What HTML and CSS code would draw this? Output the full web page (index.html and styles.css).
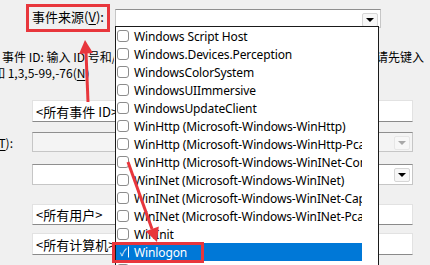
FILE: index.html
```html
<!DOCTYPE html>
<html lang="zh-CN">
<head>
    <meta charset="UTF-8">
    <title>筛选当前日志</title>
    <link rel="stylesheet" href="styles.css">
</head>
<body>
    <div class="dialog">
        <div class="source-row">
            <label class="mark-box">事件来源(<u>V</u>):</label>
            <div class="combo source-combo"><span class="combo-btn"><i class="caret"></i></span></div>
        </div>

        <div class="help">
            <div class="help-line"><span class="help-left">事件 ID: 输入 ID 号和/或 ID 范围，使用逗号分隔。若要排除条件，</span><span class="help-right">请先键入</span></div>
            <div class="help-line second">例如 1,3,5-99,-76(<u>N</u>)</div>
        </div>

        <div class="field-row r-id">
            <div class="flabel"></div>
            <div class="input">&lt;所有事件 ID&gt;</div>
        </div>
        <div class="field-row r-task">
            <div class="flabel">任务类别(<u>T</u>):</div>
            <div class="combo disabled"><span class="combo-btn"><i class="caret"></i></span></div>
        </div>
        <div class="field-row r-key">
            <div class="flabel"></div>
            <div class="combo"><span class="combo-btn"><i class="caret"></i></span></div>
        </div>
        <div class="field-row r-user">
            <div class="flabel"></div>
            <div class="input">&lt;所有用户&gt;</div>
        </div>
        <div class="field-row r-pc">
            <div class="flabel"></div>
            <div class="input">&lt;所有计算机&gt;</div>
        </div>

        <!-- 展开的下拉列表，盖在表单上面 -->
        <div class="droplist">
            <div class="item"><span class="box"></span><span class="name">Windows Script Host</span></div>
            <div class="item"><span class="box"></span><span class="name">Windows.Devices.Perception</span></div>
            <div class="item"><span class="box"></span><span class="name">WindowsColorSystem</span></div>
            <div class="item"><span class="box"></span><span class="name">WindowsUIImmersive</span></div>
            <div class="item"><span class="box"></span><span class="name">WindowsUpdateClient</span></div>
            <div class="item"><span class="box"></span><span class="name">WinHttp (Microsoft-Windows-WinHttp)</span></div>
            <div class="item"><span class="box"></span><span class="name">WinHttp (Microsoft-Windows-WinHttp-PcaSvc)</span></div>
            <div class="item"><span class="box"></span><span class="name">WinHttp (Microsoft-Windows-WinINet-Config)</span></div>
            <div class="item"><span class="box"></span><span class="name">WinINet (Microsoft-Windows-WinINet)</span></div>
            <div class="item"><span class="box"></span><span class="name">WinINet (Microsoft-Windows-WinINet-Capture)</span></div>
            <div class="item"><span class="box"></span><span class="name">WinINet (Microsoft-Windows-WinINet-PcaSvc)</span></div>
            <div class="item"><span class="box"></span><span class="name">WinInit</span></div>
            <div class="item selected"><span class="box checked">&#10003;</span><span class="name">Winlogon</span></div>
            <div class="item"><span class="box"></span><span class="name">Winsock AFD</span></div>
        </div>

        <div class="mark-item"></div>

        <svg class="arrows" width="430" height="265" viewBox="0 0 430 265">
            <line x1="88" y1="102" x2="86" y2="52" stroke="#e8363c" stroke-width="3"/>
            <polygon points="85,40 79,54 93,53" fill="#e8363c"/>
            <line x1="128" y1="162" x2="152" y2="229" stroke="#e8363c" stroke-width="3"/>
            <polygon points="157,242 145.6,231.2 158.8,226.4" fill="#e8363c"/>
        </svg>
    </div>
</body>
</html>
```

FILE: styles.css
```css
* {
    box-sizing: border-box;
}

body {
    margin: 0;
    background-color: #f0f0f0;
    font-family: "Noto Sans", "Noto Sans CJK SC", sans-serif;
    font-size: 12px;
    color: #000;
    overflow: hidden;
}

.dialog {
    position: relative;
    width: 430px;
    height: 265px;
    overflow: hidden;
}

u {
    text-decoration: underline;
    text-underline-offset: 2px;
}

.source-row {
    display: flex;
    padding-top: 4px;
}

.mark-box {
    margin-left: 26px;
    width: 84px;
    height: 28px;
    border: 3px solid #e8363c;
    display: flex;
    align-items: center;
    padding-left: 3px;
    padding-bottom: 3px;
    font-family: "Noto Sans CJK SC", sans-serif;
    font-size: 13px;
}

.combo {
    position: relative;
    height: 20px;
    background-color: #fff;
    border: 1px solid #c6c6c6;
    border-top-color: #8f8f8f;
}

.source-combo {
    margin: 5px 0 0 5px;
    width: 266px;
    height: 19px;
}

.combo-btn {
    position: absolute;
    right: 2px;
    top: 3px;
    width: 16px;
    height: 14px;
    border: 1px solid #d6d6d6;
    border-radius: 2px;
    background-color: #f7f7f7;
    display: flex;
    align-items: center;
    justify-content: center;
}

.caret {
    width: 0;
    height: 0;
    border-left: 4px solid transparent;
    border-right: 4px solid transparent;
    border-top: 4px solid #000;
}

.combo.disabled {
    background-color: #f4f4f4;
}

.combo.disabled .combo-btn {
    border-color: #e6e6e6;
}

.combo.disabled .caret {
    border-top-color: #a8a8a8;
}

.help {
    margin-top: 17px;
    padding-left: 2px;
    font-family: "Noto Sans CJK SC", sans-serif;
    line-height: 16px;
}

.help-line {
    display: flex;
    white-space: nowrap;
}

.help-left {
    width: 112px;
    overflow: hidden;
}

.help-right {
    margin-left: 262px;
}

.help-line.second {
    margin-left: -21px;
}

.field-row {
    display: grid;
    grid-template-columns: 32px 381px;
    align-items: center;
}

.flabel {
    display: flex;
    justify-content: flex-end;
    white-space: nowrap;
    padding-right: 19px;
    font-family: "Noto Sans CJK SC", sans-serif;
}

.input {
    background-color: #fff;
    border: 1px solid #e2e2e2;
    border-bottom-color: #8a8a8a;
    padding-left: 3px;
    font-family: "Noto Sans CJK SC", sans-serif;
    font-size: 13px;
    display: flex;
    align-items: center;
}

.r-id {
    margin-top: 19px;
}

.r-id .input {
    height: 22px;
}

.r-task {
    margin-top: 10px;
}

.r-task .combo {
    height: 20px;
}

.r-key {
    margin-top: 12px;
}

.r-key .combo {
    height: 21px;
}

.r-user {
    margin-top: 19px;
}

.r-user .input {
    height: 21px;
}

.r-pc {
    margin-top: 8px;
}

.r-pc .input {
    height: 22px;
}

.droplist {
    position: absolute;
    left: 115px;
    top: 26px;
    width: 264px;
    height: 260px;
    background-color: #fff;
    border: 1px solid #1a1a1a;
    padding-right: 16px;
}

.item {
    height: 18px;
    display: flex;
    align-items: center;
    white-space: nowrap;
    overflow: hidden;
    padding-left: 1px;
    letter-spacing: -0.12px;
}

.box {
    flex: none;
    width: 12px;
    height: 12px;
    border: 1px solid #8c8c8c;
    border-radius: 3px;
    background-color: #fff;
    margin-right: 5px;
    font-size: 10px;
    line-height: 10px;
    text-align: center;
}

.item.selected {
    background-color: #0078d7;
    color: #fff;
}

.box.checked {
    background-color: #0078d7;
    border-color: #0078d7;
    color: #fff;
    border-right: 1px solid #fff;
    border-radius: 0;
}

.mark-item {
    position: absolute;
    left: 112px;
    top: 242px;
    width: 92px;
    height: 21px;
    border: 3px solid #e8363c;
}

.arrows {
    position: absolute;
    left: 0;
    top: 0;
}
```
